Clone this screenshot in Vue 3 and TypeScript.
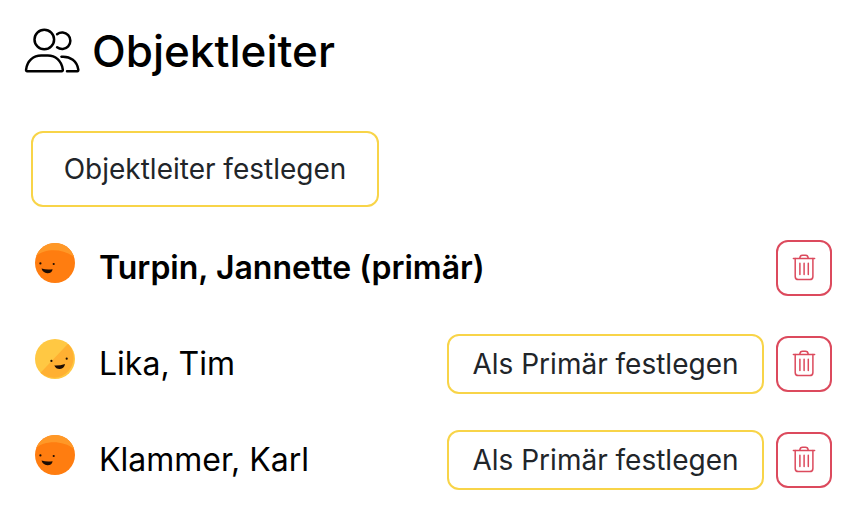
<script setup lang="ts">
interface Manager {
  name: string
  primary: boolean
  mood: 'orange' | 'yellow'
}

const managers: Manager[] = [
  { name: 'Turpin, Jannette', primary: true, mood: 'orange' },
  { name: 'Lika, Tim', primary: false, mood: 'yellow' },
  { name: 'Klammer, Karl', primary: false, mood: 'orange' },
]
</script>

<template>
  <main class="panel">
    <h1 class="title">
      <svg class="people" viewBox="0 0 56 46" fill="none" stroke="currentColor" stroke-width="2.5" stroke-linecap="round" stroke-linejoin="round">
        <circle cx="20.3" cy="11.5" r="9.8" />
        <path d="M3.2 43.2H37.6Q39 43.2 38.8 41.6C37.6 32.4 31.3 27.5 23.8 27.5H17.2C9.6 27.5 3.2 32.4 2.1 41.6Q1.9 43.2 3.2 43.2Z" />
        <path d="M33.1 6.3A8.2 8.2 0 1 1 33.1 19.2" />
        <path d="M37.4 28.7C46.4 28 53.2 33.1 54.3 41.7Q54.5 43.2 53.3 43.2H43" />
      </svg>
      <span>Objektleiter</span>
    </h1>
    <button class="btn assign" type="button">Objektleiter festlegen</button>
    <ul class="list">
      <li v-for="m in managers" :key="m.name" class="row">
        <svg v-if="m.mood === 'orange'" class="avatar" viewBox="0 0 40 40">
          <circle cx="20" cy="20" r="20" fill="#ff7d10" />
          <path d="M1.2 13.2C9 5.5 28 5 39.1 14.1A20 20 0 0 0 1.2 13.2Z" fill="#ff9827" />
          <circle cx="5.4" cy="20.4" r="1.1" fill="#1d0d04" />
          <circle cx="18.7" cy="21" r="1.1" fill="#1d0d04" />
          <path d="M6.5 25.6Q12 27.2 17.6 26.2Q17 30.3 12.3 30.2Q7.8 30 6.5 25.6Z" fill="#1d0d04" />
        </svg>
        <svg v-else class="avatar" viewBox="0 0 40 40">
          <circle cx="20" cy="20" r="20" fill="#ffc843" />
          <path d="M5.5 33.8L33 4.8A20 20 0 0 1 5.5 33.8Z" fill="#ffb032" />
          <circle cx="16.4" cy="21.9" r="1.1" fill="#1d0d04" />
          <circle cx="31.7" cy="19.7" r="1.1" fill="#1d0d04" />
          <path d="M19.3 26.4Q25 26.6 30 24.9Q29.3 29.6 25 29.9Q21 30.1 19.3 26.4Z" fill="#1d0d04" />
        </svg>
        <span class="name" :class="{ primary: m.primary }">{{ m.name }}{{ m.primary ? ' (primär)' : '' }}</span>
        <button v-if="!m.primary" class="btn promote" type="button">Als Primär festlegen</button>
        <button class="remove" type="button" aria-label="Entfernen">
          <svg viewBox="0 0 24 28" fill="none" stroke="currentColor" stroke-width="1.5" stroke-linecap="round" stroke-linejoin="round">
            <path d="M1.4 4.4H22.6" />
            <path d="M7.8 4.1C8 2.2 9 1.3 10.6 1.3H13.4C15 1.3 16 2.2 16.2 4.1" />
            <path d="M3.2 4.6V22.4Q3.2 25.6 6.4 25.6H17.7Q20.9 25.6 20.9 22.4V4.6" />
            <path d="M7.9 9.2V20.4M12.1 9.2V20.4M16.3 9.2V20.4" />
          </svg>
        </button>
      </li>
    </ul>
  </main>
</template>

<style>
body {
  margin: 0;
  background: #fff;
}
</style>

<style scoped>
.panel {
  box-sizing: border-box;
  width: 858px;
  height: 526px;
  padding: 20px 26px 0 24px;
  overflow: hidden;
  font-family: Inter, 'Liberation Sans', sans-serif;
  color: #000;
}
.title {
  display: flex;
  align-items: center;
  gap: 12px;
  height: 62px;
  margin: 0;
  font-size: 44px;
  font-weight: 500;
  line-height: 62px;
}
.people {
  width: 56px;
  height: 46px;
}
.btn {
  box-sizing: border-box;
  padding: 0;
  border: 2px solid #f8d448;
  border-radius: 12px;
  background: #fff;
  color: #212529;
  font: 400 28px Inter, 'Liberation Sans', sans-serif;
  white-space: nowrap;
}
.assign {
  display: block;
  width: 348px;
  height: 76px;
  margin: 49px 0 0 7px;
}
.list {
  margin: 13px 0 0;
  padding: 0;
  list-style: none;
}
.row {
  display: flex;
  align-items: center;
  height: 96px;
}
.avatar {
  flex: none;
  width: 40px;
  height: 40px;
  margin: 0 24px 10px 11px;
}
.name {
  flex: 1;
  padding-bottom: 1px;
  font-size: 32px;
  line-height: 39px;
  white-space: nowrap;
}
.primary {
  font-weight: 600;
}
.promote {
  width: 317px;
  height: 60px;
  margin-right: 12px;
}
.remove {
  display: flex;
  align-items: center;
  justify-content: center;
  box-sizing: border-box;
  width: 56px;
  height: 56px;
  padding: 0;
  border: 2px solid #dc4a5d;
  border-radius: 12px;
  background: #fff;
  color: #dc4a5d;
}
.remove svg {
  width: 24px;
  height: 28px;
}
</style>
